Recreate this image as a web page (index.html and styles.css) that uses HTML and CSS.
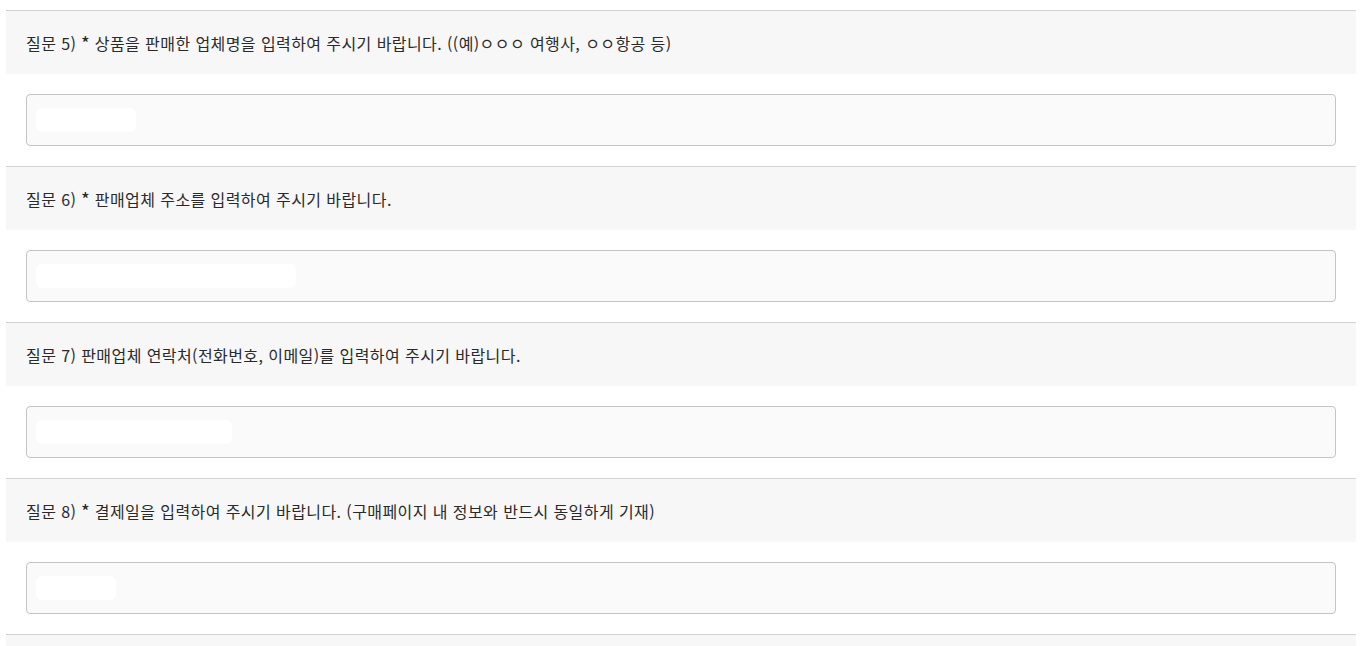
FILE: index.html
```html
<!DOCTYPE html>
<html lang="ko">
<head>
<meta charset="utf-8">
<link rel="stylesheet" href="styles.css">
</head>
<body>
<div class="page">
  <section class="q">
    <div class="q-head">질문 5) <span class="req">*</span> 상품을 판매한 업체명을 입력하여 주시기 바랍니다. ((예)ㅇㅇㅇ 여행사, ㅇㅇ항공 등)</div>
    <div class="q-body"><div class="field"><span class="blur" style="width:100px"></span></div></div>
  </section>
  <section class="q">
    <div class="q-head">질문 6) <span class="req">*</span> 판매업체 주소를 입력하여 주시기 바랍니다.</div>
    <div class="q-body"><div class="field"><span class="blur" style="width:260px"></span></div></div>
  </section>
  <section class="q">
    <div class="q-head">질문 7) 판매업체 연락처(전화번호, 이메일)를 입력하여 주시기 바랍니다.</div>
    <div class="q-body"><div class="field"><span class="blur" style="width:196px"></span></div></div>
  </section>
  <section class="q">
    <div class="q-head">질문 8) <span class="req">*</span> 결제일을 입력하여 주시기 바랍니다. (구매페이지 내 정보와 반드시 동일하게 기재)</div>
    <div class="q-body"><div class="field"><span class="blur" style="width:80px"></span></div></div>
  </section>
  <section class="q last"><div class="q-head"></div></section>
</div>
</body>
</html>
```
FILE: styles.css
```css
html, body { margin: 0; padding: 0; background: #fff; }
body { font-family: "Noto Sans CJK KR", "Noto Sans", sans-serif; color: #2a2a2a; }
.page { padding: 10px 11px 0 6px; }
.q { border-top: 1px solid #d2d2d2; }
.q-head {
  background: #f7f7f7;
  height: 63px;
  box-sizing: border-box;
  padding: 0 20px;
  display: flex;
  align-items: center;
  white-space: pre;
  font-size: 16px;
  letter-spacing: 0.42px;
}
.req {
  display: inline-block;
  font-size: 17px;
  font-weight: 500;
  vertical-align: -4px;
  line-height: 1;
}
.q-body { padding: 20px 20px; }
.field {
  height: 52px;
  box-sizing: border-box;
  border: 1px solid #c4c4c4;
  border-radius: 4px;
  background: #fafafa;
  display: flex;
  align-items: center;
  padding-left: 9px;
}
.blur {
  display: block;
  height: 24px;
  background: #fff;
  border-radius: 6px;
}
.last .q-head { height: 12px; }
```
